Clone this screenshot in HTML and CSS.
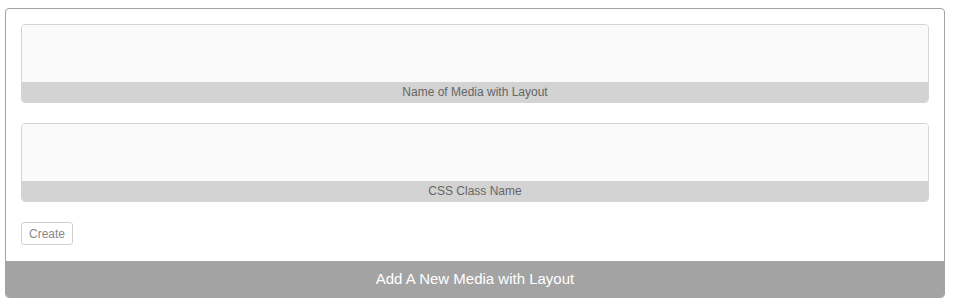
FILE: index.html
```html
<!DOCTYPE html>
<html lang="en">
<head>
    <meta charset="UTF-8">
    <title>Add Media with Layout</title>
    <link rel="stylesheet" href="styles.css">
</head>
<body>
    <div class="panel">
        <div class="panel-body">
            <div class="field">
                <input type="text" class="field-input" id="media-name">
                <label class="field-label" for="media-name">Name of Media with Layout</label>
            </div>
            <div class="field">
                <input type="text" class="field-input" id="css-class">
                <label class="field-label" for="css-class">CSS Class Name</label>
            </div>
            <button class="create-btn">Create</button>
        </div>
        <div class="panel-footer">Add A New Media with Layout</div>
    </div>
</body>
</html>
```

FILE: styles.css
```css
body {
    margin: 8px 10px 8px 5px;
    font-family: "Liberation Sans", Arial, sans-serif;
    background-color: #fff;
}

.panel {
    border: 1px solid #a3a3a3;
    border-radius: 4px;
    overflow: hidden;
}

.panel-body {
    padding: 15px 15px 16px 15px;
}

.field {
    display: flex;
    flex-direction: column;
    border: 1px solid #d4d4d4;
    border-radius: 4px;
    overflow: hidden;
    margin-bottom: 20px;
}

.field-input {
    height: 57px;
    border: none;
    margin: 0;
    padding: 0 8px;
    background-color: #fafafa;
    outline: none;
}

.field-label {
    height: 20px;
    line-height: 20px;
    background-color: #d3d3d3;
    color: #666;
    font-size: 12px;
    text-align: center;
}

.create-btn {
    display: block;
    font-family: "Liberation Sans", Arial, sans-serif;
    font-size: 12px;
    color: #888;
    background-color: #fff;
    border: 1px solid #d0d0d0;
    border-radius: 3px;
    height: 23px;
    padding: 0 7px;
    margin-top: 0;
}

.panel-footer {
    background-color: #a3a3a3;
    color: #fff;
    font-size: 15px;
    text-align: center;
    height: 36px;
    line-height: 36px;
}
```
